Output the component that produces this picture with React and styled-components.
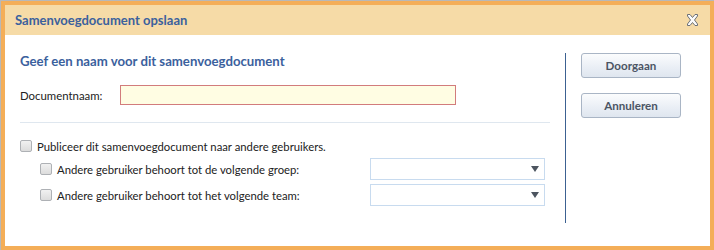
import React from 'react'
import styled, { createGlobalStyle } from 'styled-components'

const Global = createGlobalStyle`
  html, body {
    margin: 0;
    padding: 0;
    background: #b8b8b8;
  }
  body {
    font-family: Lato, "Open Sans", sans-serif;
    font-size: 11.3px;
    color: #222;
  }
`

const Dialog = styled.div`
  box-sizing: border-box;
  width: 713px;
  height: 249px;
  margin: 1px 0 0 1px;
  border: 4px solid #f4ae58;
  background: #fff;
  display: flex;
  flex-direction: column;
`

const Header = styled.div`
  height: 30px;
  background: #f6dba7;
  display: flex;
  align-items: center;
  justify-content: space-between;
  padding: 0 10px 0 10px;
`

const Title = styled.div`
  font-weight: bold;
  font-size: 13px;
  color: #3b619d;
`

const Close = styled.button`
  border: 0;
  background: none;
  padding: 0;
  width: 15px;
  height: 14px;
  display: flex;
  cursor: pointer;
`

const Body = styled.div`
  display: flex;
  padding: 18px 0 0 15px;
`

const Main = styled.div`
  width: 530px;
  display: flex;
  flex-direction: column;
`

const Heading = styled.div`
  font-weight: bold;
  font-size: 13.2px;
  line-height: 16px;
  color: #3b619d;
`

const FieldRow = styled.div`
  display: flex;
  align-items: center;
  margin-top: 16px;
`

const Label = styled.label`
  width: 100px;
  font-size: 11.4px;
`

const TextInput = styled.input`
  box-sizing: border-box;
  width: 336px;
  height: 20px;
  border: 1px solid #d27c7c;
  background: #fffde3;
  outline: none;
`

const Divider = styled.div`
  height: 1px;
  background: #dfe7ef;
  margin: 17px 0 15px;
`

const CheckRow = styled.div`
  display: flex;
  align-items: center;
  height: ${p => (p.$sub ? '22px' : '16px')};
  padding-left: ${p => (p.$sub ? '20px' : '0')};
  margin-top: ${p => (p.$first ? '0' : '4px')};
`

const Box = styled.span`
  box-sizing: border-box;
  width: 12px;
  height: 12px;
  border: 1px solid #aeb1b5;
  border-radius: 2px;
  background: linear-gradient(#f1f1f1, #dcdcdc);
  margin-right: 5px;
  flex: none;
`

const CheckText = styled.span`
  width: ${p => (p.$w ? p.$w + 'px' : 'auto')};
`

const Select = styled.div`
  box-sizing: border-box;
  width: 175px;
  height: 22px;
  border: 1px solid #c8dbef;
  display: flex;
  align-items: center;
  justify-content: flex-end;
  padding-right: 5px;
`

const Arrow = styled.span`
  width: 0;
  height: 0;
  border-left: 4px solid transparent;
  border-right: 4px solid transparent;
  border-top: 6px solid #4d5560;
`

const Separator = styled.div`
  width: 1px;
  height: 170px;
  background: #3c6191;
  margin: 0 15px;
`

const Buttons = styled.div`
  display: flex;
  flex-direction: column;
  gap: 15px;
`

const Button = styled.button`
  box-sizing: border-box;
  width: 100px;
  height: 25px;
  border: 1px solid #a9b5c5;
  border-radius: 3px;
  background: linear-gradient(#fbfcfd, #e9eef5 60%, #dfe6ef);
  color: #4b5564;
  font-family: Lato, "Open Sans", sans-serif;
  font-size: 11.6px;
  font-weight: bold;
  padding: 0;
`

const CloseIcon = () => (
  <svg width="15" height="14" viewBox="0 0 15 14">
    <path
      d="M2.5 1.5 L5 1.5 L7.5 4.5 L10 1.5 L12.5 1.5 L12.5 3 L9.5 7 L12.5 11 L12.5 12.5 L10 12.5 L7.5 9.5 L5 12.5 L2.5 12.5 L2.5 11 L5.5 7 L2.5 3 Z"
      fill="#fbfbfb"
      stroke="#6c7178"
      strokeWidth="1"
      strokeLinejoin="round"
    />
  </svg>
)

const App = () => {
  return (
    <>
      <Global />
      <Dialog>
        <Header>
          <Title>Samenvoegdocument opslaan</Title>
          <Close aria-label="Sluiten">
            <CloseIcon />
          </Close>
        </Header>
        <Body>
          <Main>
            <Heading>Geef een naam voor dit samenvoegdocument</Heading>
            <FieldRow>
              <Label>Documentnaam:</Label>
              <TextInput />
            </FieldRow>
            <Divider />
            <CheckRow $first>
              <Box />
              <CheckText>Publiceer dit samenvoegdocument naar andere gebruikers.</CheckText>
            </CheckRow>
            <CheckRow $sub>
              <Box />
              <CheckText $w={313}>Andere gebruiker behoort tot de volgende groep:</CheckText>
              <Select>
                <Arrow />
              </Select>
            </CheckRow>
            <CheckRow $sub>
              <Box />
              <CheckText $w={313}>Andere gebruiker behoort tot het volgende team:</CheckText>
              <Select>
                <Arrow />
              </Select>
            </CheckRow>
          </Main>
          <Separator />
          <Buttons>
            <Button>Doorgaan</Button>
            <Button>Annuleren</Button>
          </Buttons>
        </Body>
      </Dialog>
    </>
  )
}

export default App
